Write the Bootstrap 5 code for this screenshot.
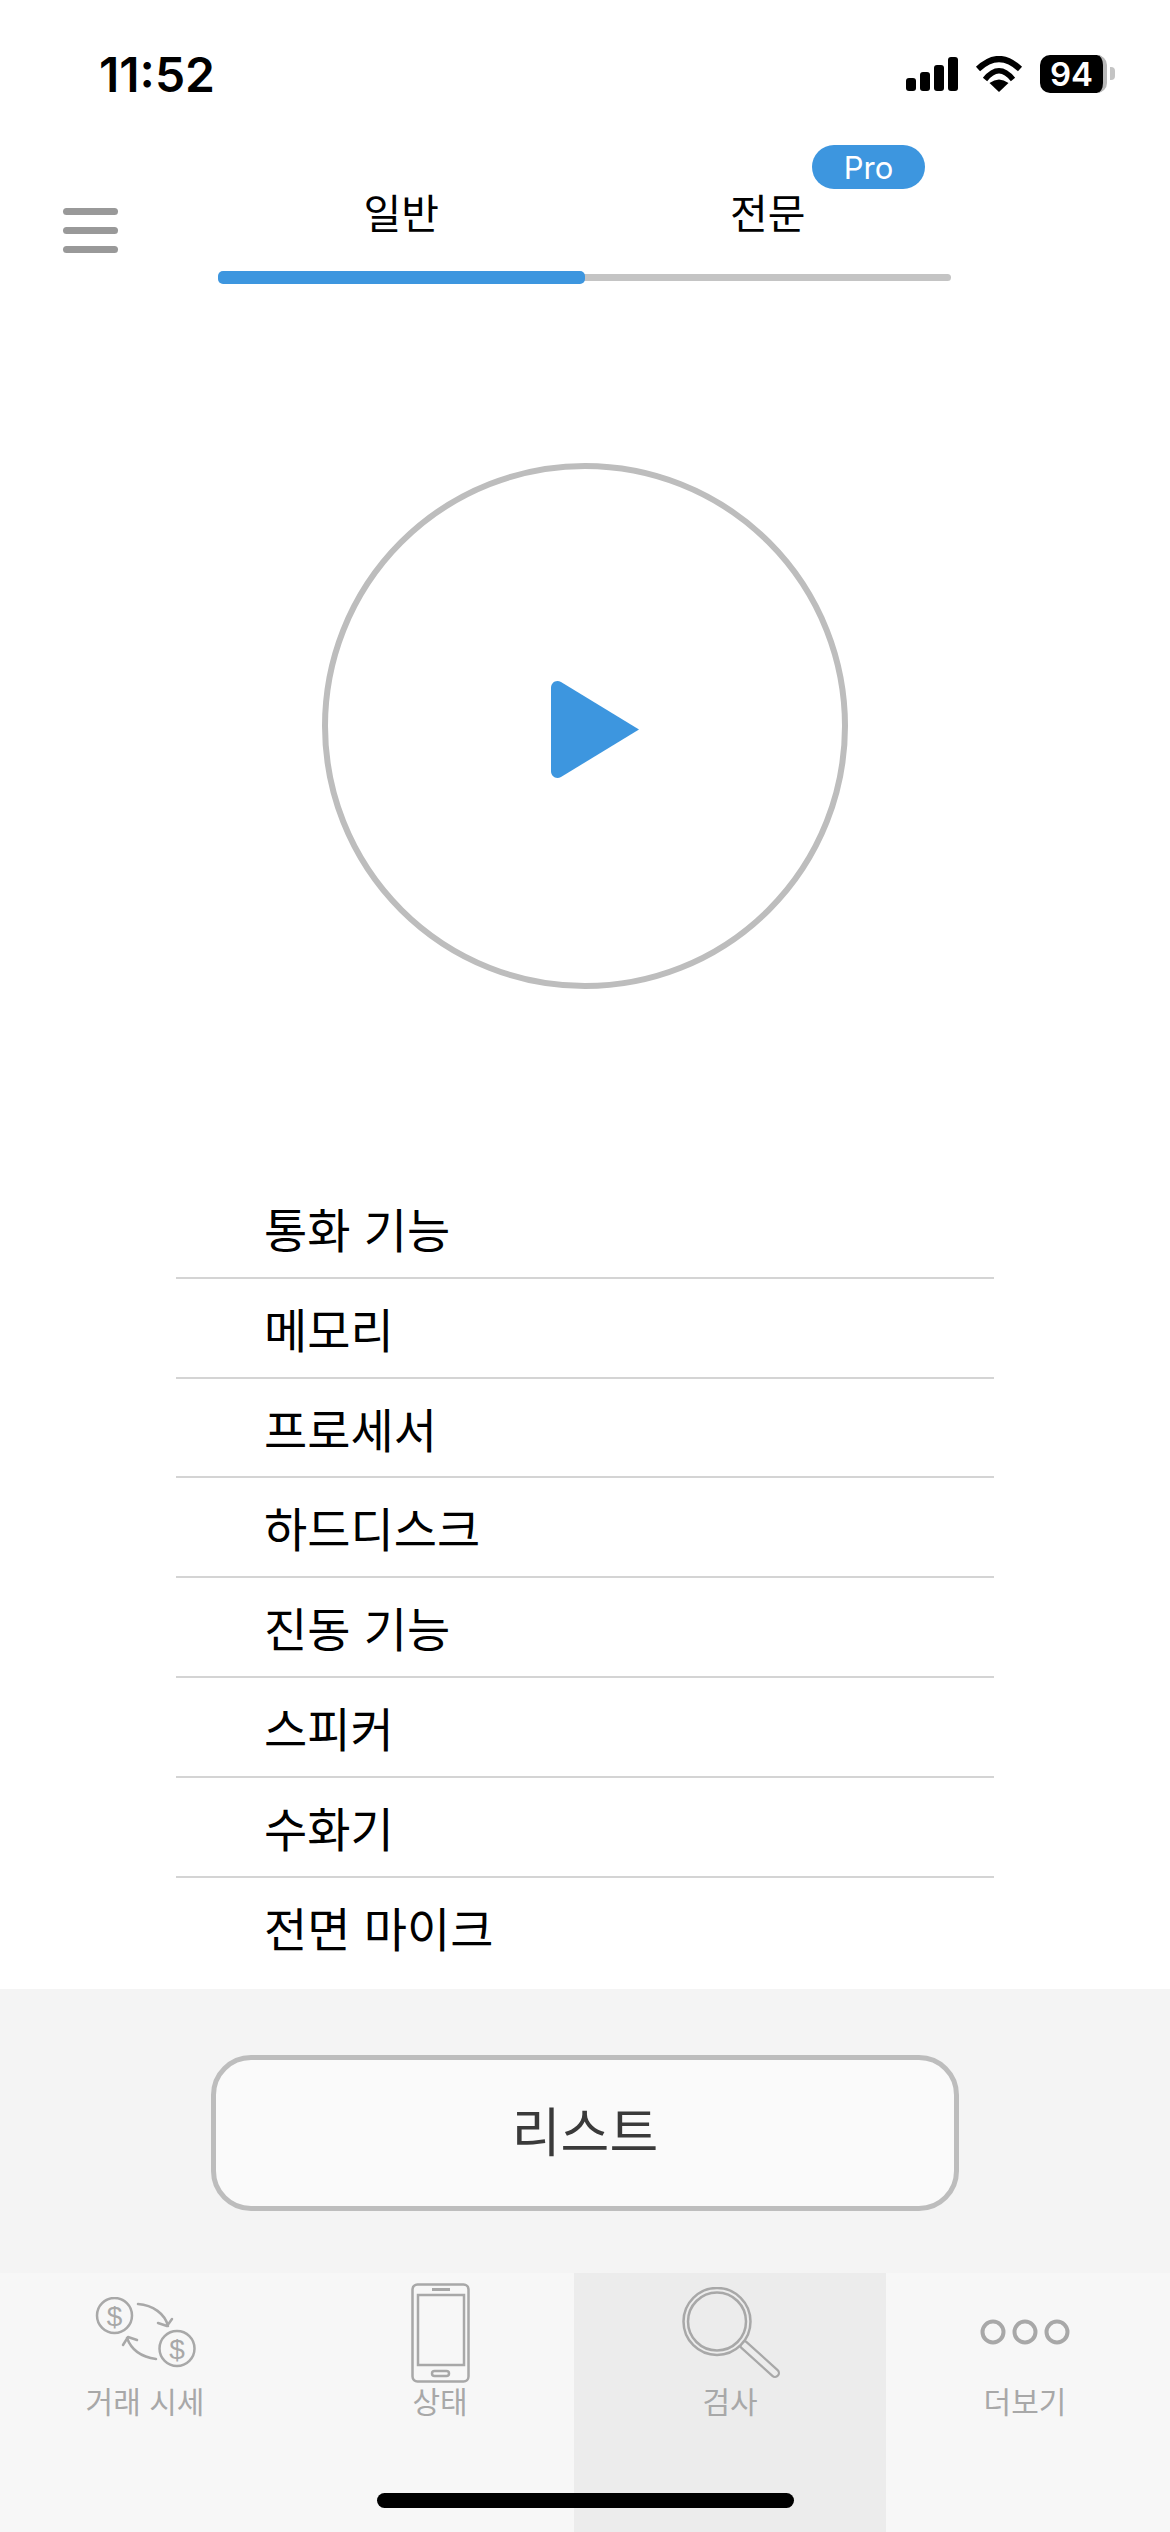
<!DOCTYPE html>
<html lang="ko">
<head>
    <meta charset="utf-8">
    <title>검사</title>
    <link href="https://cdn.jsdelivr.net/npm/bootstrap@5.3.3/dist/css/bootstrap.min.css" rel="stylesheet">
    <style>
        body {
            width: 1170px;
            height: 2532px;
            overflow: hidden;
            background: #fff;
            font-family: "Inter", "Noto Sans CJK KR", sans-serif;
            color: #000;
        }
        .phone-page { width: 1170px; height: 2532px; position: relative; }

        .status-row { height: 130px; padding: 52px 63px 0 99px; }
        .clock { font-family: "Inter", sans-serif; font-weight: 600; font-size: 48px; line-height: 46px; }
        .status-icons { gap: 17px; margin-top: 3px; }
        .batt { width: 67px; height: 38px; border-radius: 10px; background: #000; border-right: 4px solid #b8b8b8; color: #fff; font-weight: 600; font-size: 33px; line-height: 38px; text-align: center; position: relative; }
        .batt::after { content: ""; position: absolute; right: -12px; top: 12px; width: 5px; height: 13px; border-radius: 0 4px 4px 0; background: #c4c4c4; }

        .head-row { height: 154px; }
        .burger { width: 218px; padding: 78px 0 0 63px; }
        .burger span { display: block; width: 55px; height: 7px; border-radius: 4px; background: #999; margin-bottom: 12px; }
        .seg-wrap { width: 733px; position: relative; }
        .seg-tab { width: 50%; height: 144px; padding-top: 57px; text-align: center; font-size: 41px; line-height: 54px; color: #000; }
        .seg-line { height: 7px; border-radius: 4px; background: #c4c4c4; position: relative; }
        .seg-on { position: absolute; left: 0; top: -3px; width: 367px; height: 13px; border-radius: 5px; background: #3d96df; }
        .pro-pill { position: absolute; left: 594px; top: 15px; width: 113px; height: 44px; border-radius: 22px; background: #3d96df; color: #fff; font-family: "Inter", sans-serif; font-size: 31px; line-height: 45px; text-align: center; }

        .play-zone { padding-top: 179px; }
        .play-ring { width: 526px; height: 526px; border: 6px solid #bdbdbd; border-radius: 50%; background: #fff; padding: 6px 0 0 20px; }

        .test-list { width: 818px; margin: 190px 0 0 176px; }
        .test-list .list-group-item { height: 99.8px; padding: 22px 0 0 88px; border: 0; border-bottom: 2px solid #d4d4d4; background: transparent; font-size: 47px; line-height: 60px; color: #000; }

        .action-zone { position: absolute; left: 0; top: 1989px; width: 1170px; height: 284px; padding: 66px 211px 0; background: #f4f4f4; }
        .list-btn { width: 748px; height: 156px; border: 5px solid #bdbdbd; border-radius: 40px; background: #fafafa; color: #3a3a3a; font-size: 53px; line-height: 64px; }

        .tab-zone { position: absolute; left: 0; top: 2273px; width: 1170px; height: 259px; background: #f7f7f7; }
        .tab-cell { height: 259px; color: #a8a8a8; font-size: 30px; line-height: 36px; }
        .tab-icon { height: 111px; }
        .icon-coins { padding-top: 24px; }
        .icon-phone { padding-top: 10px; }
        .icon-lens { padding-top: 14px; }
        .icon-dots { padding-top: 46px; }
        .cell-a { width: 290px; }
        .cell-b { width: 284px; padding-left: 16px; }
        .cell-c { width: 312px; background: #ececec; }
        .cell-d { width: 284px; padding-right: 6px; }
        .home-line { position: absolute; left: 377px; top: 2493px; width: 417px; height: 15px; border-radius: 8px; background: #000; }
    </style>
</head>
<body>
<div class="phone-page">
    <div class="status-row d-flex justify-content-between align-items-start">
        <div class="clock">11:52</div>
        <div class="status-icons d-flex align-items-center">
            <svg width="52" height="34" viewBox="0 0 52 34"><rect x="0" y="21" width="10" height="13" rx="3"/><rect x="14" y="15" width="10" height="19" rx="3"/><rect x="28" y="8" width="10" height="26" rx="3"/><rect x="42" y="0" width="10" height="34" rx="3"/></svg>
            <svg width="48" height="36" viewBox="0 0 48 36">
                <path d="M24 36L14.500 27Q24 20 33.500 27Z"/>
                <path d="M10 23.500Q24 6 38 23.500" fill="none" stroke="#000" stroke-width="5.500"/>
                <path d="M3 13Q24 -7 45 13" fill="none" stroke="#000" stroke-width="6"/>
            </svg>
            <div class="batt">94</div>
        </div>
    </div>

    <div class="head-row d-flex">
        <div class="burger"><span></span><span></span><span></span></div>
        <div class="seg-wrap">
            <div class="d-flex">
                <div class="seg-tab">일반</div>
                <div class="seg-tab">전문</div>
            </div>
            <div class="seg-line"><div class="seg-on"></div></div>
            <div class="pro-pill">Pro</div>
        </div>
    </div>

    <div class="play-zone d-flex justify-content-center">
        <button type="button" class="play-ring btn d-flex align-items-center justify-content-center">
            <svg width="88" height="97" viewBox="0 0 88 97"><path d="M0 7C0 1.500 5 -1.500 10 1L88 48.500 10 96C5 98.500 0 95.500 0 90Z" fill="#3d96df"/></svg>
        </button>
    </div>

    <div class="test-list list-group list-group-flush">
        <div class="list-group-item">통화 기능</div>
        <div class="list-group-item">메모리</div>
        <div class="list-group-item">프로세서</div>
        <div class="list-group-item">하드디스크</div>
        <div class="list-group-item">진동 기능</div>
        <div class="list-group-item">스피커</div>
        <div class="list-group-item">수화기</div>
        <div class="list-group-item">전면 마이크</div>
    </div>

    <div class="action-zone">
        <button type="button" class="list-btn btn">리스트</button>
    </div>

    <div class="tab-zone d-flex">
        <div class="tab-cell cell-a d-flex flex-column align-items-center">
            <div class="tab-icon icon-coins">
                <svg class="d-block" width="101" height="71" viewBox="0 0 101 71" fill="none" stroke="#a8a8a8" stroke-width="2.500" stroke-linecap="round" stroke-linejoin="round">
                    <circle cx="19.500" cy="18.500" r="17.500"/>
                    <circle cx="82" cy="51.500" r="17.500"/>
                    <text x="19.500" y="28.500" text-anchor="middle" font-size="28" font-family="Liberation Sans" fill="#a8a8a8" stroke="none">$</text>
                    <text x="82" y="61.500" text-anchor="middle" font-size="28" font-family="Liberation Sans" fill="#a8a8a8" stroke="none">$</text>
                    <path d="M43 7C58 8 70 17 73 29M63 26l9 3 5-7"/>
                    <path d="M61 62C46 60 36 52 32 41M28 48l5-8 9 3"/>
                </svg>
            </div>
            <div>거래 시세</div>
        </div>
        <div class="tab-cell cell-b d-flex flex-column align-items-center">
            <div class="tab-icon icon-phone">
                <svg class="d-block" width="59" height="100" viewBox="0 0 59 100" fill="none" stroke="#a8a8a8" stroke-width="2.500">
                    <rect x="1.500" y="1.500" width="56" height="97" rx="5"/>
                    <rect x="7" y="12" width="46" height="70"/>
                    <path d="M21 6.500h18" stroke-width="3"/>
                    <rect x="21" y="88" width="17" height="5" rx="2.500"/>
                </svg>
            </div>
            <div>상태</div>
        </div>
        <div class="tab-cell cell-c d-flex flex-column align-items-center">
            <div class="tab-icon icon-lens">
                <svg class="d-block" width="100" height="92" viewBox="0 0 100 92" fill="none" stroke="#a8a8a8">
                    <path d="M64 58L95 86" stroke-width="10" stroke-linecap="round"/>
                    <path d="M64 58L95 86" stroke="#ececec" stroke-width="5.500" stroke-linecap="round"/>
                    <circle cx="37" cy="34.500" r="33.500" fill="#ececec" stroke-width="2.500"/>
                    <circle cx="37" cy="34.500" r="29" stroke-width="2.500"/>
                </svg>
            </div>
            <div>검사</div>
        </div>
        <div class="tab-cell cell-d d-flex flex-column align-items-center">
            <div class="tab-icon icon-dots">
                <svg class="d-block" width="90" height="26" viewBox="0 0 90 26" fill="none" stroke="#a8a8a8" stroke-width="4">
                    <circle cx="13" cy="13" r="10.500"/><circle cx="45" cy="13" r="10.500"/><circle cx="77" cy="13" r="10.500"/>
                </svg>
            </div>
            <div>더보기</div>
        </div>
    </div>
    <div class="home-line"></div>
</div>
<script src="https://cdn.jsdelivr.net/npm/bootstrap@5.3.3/dist/js/bootstrap.bundle.min.js"></script>
</body>
</html>
